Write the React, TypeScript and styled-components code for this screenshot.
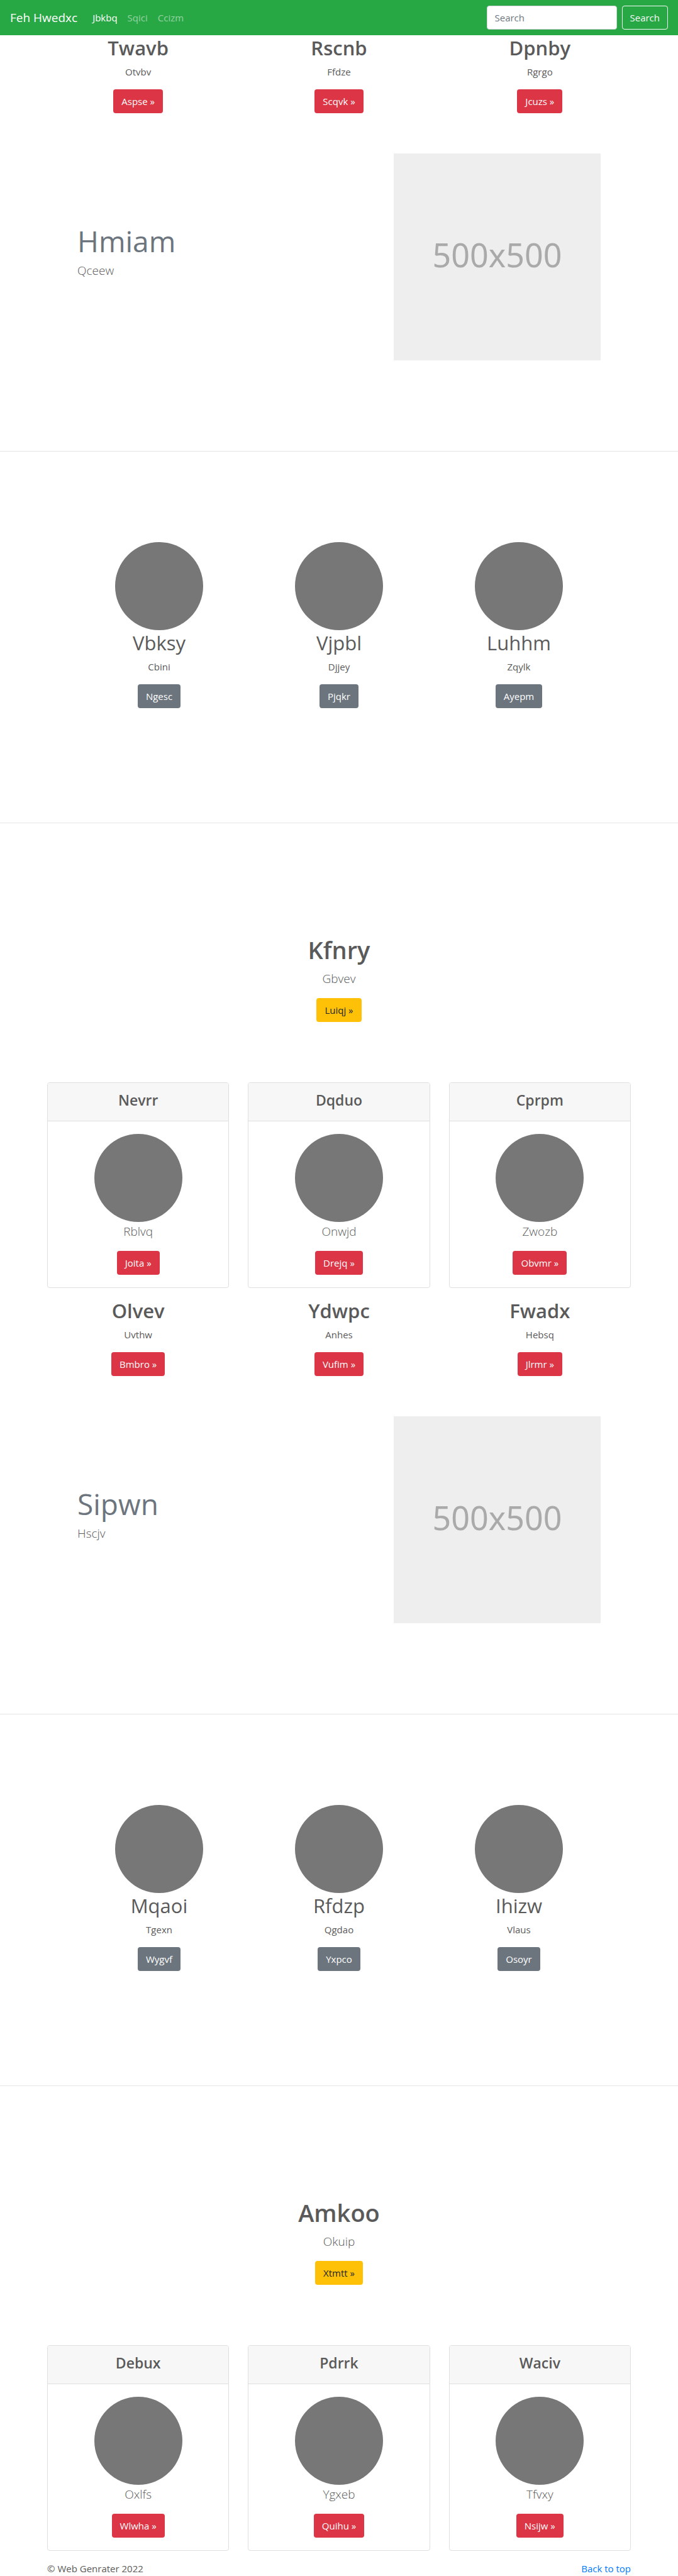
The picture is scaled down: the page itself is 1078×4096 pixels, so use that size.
import React from "react";
import styled, { createGlobalStyle, css } from "styled-components";

const GlobalStyle = createGlobalStyle`
  *, *::before, *::after { box-sizing: border-box; }
  body {
    margin: 0;
    background: #fff;
    color: #5a5a5a;
    font-family: "Open Sans", "Noto Sans", sans-serif;
    font-size: 15px;
    line-height: 24px;
  }
  h1, h2, h3, h4, p { margin: 0; }
`;

type Tone = "danger" | "secondary" | "warning";

const tones: Record<Tone, { background: string; color: string }> = {
  danger: { background: "#dc3545", color: "#fff" },
  secondary: { background: "#6c757d", color: "#fff" },
  warning: { background: "#ffc107", color: "#212529" },
};

const controlShape = css`
  height: 38px;
  padding: 0 12px;
  border: 1px solid transparent;
  border-radius: 4px;
  font-family: inherit;
  font-size: 15px;
  line-height: 24px;
`;

const NavBar = styled.header`
  display: flex;
  align-items: center;
  height: 56px;
  padding: 0 16px;
  background: #28a745;
`;

const Brand = styled.a`
  margin-right: 16px;
  color: #fff;
  font-size: 19px;
  font-weight: 500;
  line-height: 30px;
  text-decoration: none;
`;

const NavLinks = styled.nav`
  display: flex;
  flex: 1;
`;

const NavLink = styled.a<{ $active?: boolean }>`
  padding: 8px;
  color: ${({ $active }) => ($active ? "#fff" : "rgba(255, 255, 255, 0.5)")};
  text-decoration: none;
`;

const SearchForm = styled.form`
  display: flex;
  gap: 8px;
`;

const SearchInput = styled.input`
  ${controlShape}
  width: 207px;
  border-color: #ced4da;
  background: #fff;
  color: #495057;
  &::placeholder { color: #6c757d; opacity: 1; }
`;

const SearchButton = styled.button`
  ${controlShape}
  border-color: #f8f9fa;
  background: transparent;
  color: #f8f9fa;
  cursor: pointer;
`;

const Container = styled.div`
  max-width: 958px;
  margin: 0 auto;
  padding: 0 15px;
`;

const Columns = styled.div`
  display: grid;
  grid-template-columns: repeat(3, 1fr);
  gap: 30px;
`;

const Stack = styled.div`
  display: flex;
  flex-direction: column;
  align-items: center;
  text-align: center;
`;

const Heading = styled.h2<{ $light?: boolean }>`
  margin-bottom: 6px;
  font-size: 31px;
  font-weight: ${({ $light }) => ($light ? 400 : 600)};
  line-height: 40px;
`;

const Text = styled.p`
  margin-bottom: 16px;
`;

const Lead = styled.p`
  margin-bottom: 16px;
  font-size: 19px;
  font-weight: 300;
  line-height: 30px;
`;

const Button = styled.button<{ $tone: Tone }>`
  ${controlShape}
  background: ${({ $tone }) => tones[$tone].background};
  color: ${({ $tone }) => tones[$tone].color};
  cursor: pointer;
`;

const Feature = styled.section`
  display: flex;
  align-items: center;
  justify-content: space-between;
  padding: 64px 48px 144px;
`;

const FeatureTitle = styled.h2`
  margin-bottom: 6px;
  color: #6c757d;
  font-size: 46px;
  font-weight: 400;
  line-height: 52px;
`;

const Placeholder = styled.div`
  display: flex;
  flex: 0 0 329px;
  align-items: center;
  justify-content: center;
  height: 329px;
  padding-bottom: 8px;
  background: #eee;
  color: #aaa;
  font-family: "Noto Sans", sans-serif;
  font-size: 52px;
`;

const Rule = styled.hr`
  height: 1px;
  margin: 0;
  border: 0;
  background: #e5e5e5;
`;

const People = styled.section`
  max-width: 858px;
  margin: 0 auto;
  padding: 144px 0 182px;
`;

const PeopleColumns = styled(Columns)`
  gap: 0;
`;

const Avatar = styled.div`
  width: 140px;
  height: 140px;
  border-radius: 50%;
  background: #777;
`;

const Callout = styled.section`
  padding: 176px 0 96px;
`;

const CalloutTitle = styled.h1`
  margin-bottom: 6px;
  font-size: 38px;
  font-weight: 600;
  line-height: 50px;
`;

const Card = styled.article`
  border: 1px solid #dfdfdf;
  border-radius: 4px;
  overflow: hidden;
`;

const CardHeader = styled.div`
  padding: 12px 20px 18px;
  border-bottom: 1px solid #dfdfdf;
  background: #f7f7f7;
  text-align: center;
`;

const CardTitle = styled.h4`
  font-size: 23px;
  font-weight: 600;
  line-height: 30px;
`;

const CardBody = styled(Stack)`
  padding: 20px;
`;

const Group = styled.div`
  padding-bottom: 16px;
`;

const Footer = styled.footer`
  display: flex;
  justify-content: space-between;
`;

const FooterLink = styled.a`
  color: #007bff;
  text-decoration: none;
`;

type Item = { title: string; text: string; action: string };

type BlockData = {
  intro: Item[];
  feature: { title: string; text: string };
  people: Item[];
  callout: Item;
  cards: Item[];
};

const item = (title: string, text: string, action: string): Item => ({ title, text, action });

const blocks: BlockData[] = [
  {
    intro: [item("Twavb", "Otvbv", "Aspse"), item("Rscnb", "Ffdze", "Scqvk"), item("Dpnby", "Rgrgo", "Jcuzs")],
    feature: { title: "Hmiam", text: "Qceew" },
    people: [item("Vbksy", "Cbini", "Ngesc"), item("Vjpbl", "Djjey", "Pjqkr"), item("Luhhm", "Zqylk", "Ayepm")],
    callout: item("Kfnry", "Gbvev", "Luiqj"),
    cards: [item("Nevrr", "Rblvq", "Joita"), item("Dqduo", "Onwjd", "Drejq"), item("Cprpm", "Zwozb", "Obvmr")],
  },
  {
    intro: [item("Olvev", "Uvthw", "Bmbro"), item("Ydwpc", "Anhes", "Vufim"), item("Fwadx", "Hebsq", "Jlrmr")],
    feature: { title: "Sipwn", text: "Hscjv" },
    people: [item("Mqaoi", "Tgexn", "Wygvf"), item("Rfdzp", "Qgdao", "Yxpco"), item("Ihizw", "Vlaus", "Osoyr")],
    callout: item("Amkoo", "Okuip", "Xtmtt"),
    cards: [item("Debux", "Oxlfs", "Wlwha"), item("Pdrrk", "Ygxeb", "Quihu"), item("Waciv", "Tfvxy", "Nsijw")],
  },
];

function Block({ intro, feature, people, callout, cards }: BlockData) {
  return (
    <Group>
      <Container>
        <Columns>
          {intro.map((entry) => (
            <Stack key={entry.title}>
              <Heading>{entry.title}</Heading>
              <Text>{entry.text}</Text>
              <Button type="button" $tone="danger">{entry.action} »</Button>
            </Stack>
          ))}
        </Columns>
        <Feature>
          <div>
            <FeatureTitle>{feature.title}</FeatureTitle>
            <Lead>{feature.text}</Lead>
          </div>
          <Placeholder>500x500</Placeholder>
        </Feature>
      </Container>
      <Rule />
      <People>
        <PeopleColumns>
          {people.map((entry) => (
            <Stack key={entry.title}>
              <Avatar />
              <Heading $light>{entry.title}</Heading>
              <Text>{entry.text}</Text>
              <Button type="button" $tone="secondary">{entry.action}</Button>
            </Stack>
          ))}
        </PeopleColumns>
      </People>
      <Rule />
      <Container>
        <Callout>
          <Stack>
            <CalloutTitle>{callout.title}</CalloutTitle>
            <Lead>{callout.text}</Lead>
            <Button type="button" $tone="warning">{callout.action} »</Button>
          </Stack>
        </Callout>
        <Columns>
          {cards.map((entry) => (
            <Card key={entry.title}>
              <CardHeader>
                <CardTitle>{entry.title}</CardTitle>
              </CardHeader>
              <CardBody>
                <Avatar />
                <Lead>{entry.text}</Lead>
                <Button type="button" $tone="danger">{entry.action} »</Button>
              </CardBody>
            </Card>
          ))}
        </Columns>
      </Container>
    </Group>
  );
}

export default function App() {
  return (
    <>
      <GlobalStyle />
      <NavBar>
        <Brand href="#">Feh Hwedxc</Brand>
        <NavLinks>
          <NavLink href="#" $active>Jbkbq</NavLink>
          <NavLink href="#">Sqici</NavLink>
          <NavLink href="#">Ccizm</NavLink>
        </NavLinks>
        <SearchForm onSubmit={(event) => event.preventDefault()}>
          <SearchInput type="text" placeholder="Search" aria-label="Search" />
          <SearchButton type="submit">Search</SearchButton>
        </SearchForm>
      </NavBar>
      <main>
        {blocks.map((block) => (
          <Block key={block.callout.title} {...block} />
        ))}
      </main>
      <Container>
        <Footer>
          <p>© Web Genrater 2022</p>
          <FooterLink href="#">Back to top</FooterLink>
        </Footer>
      </Container>
    </>
  );
}
